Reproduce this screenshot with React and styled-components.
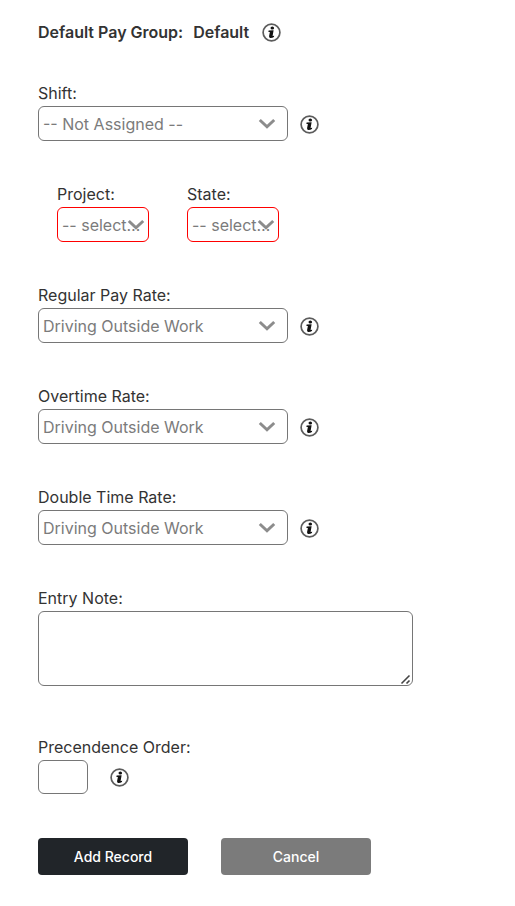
import React from "react";
import styled, { createGlobalStyle } from "styled-components";

const rates = ["Driving Outside Work", "Regular Work", "Travel"];

function App() {
  return (
    <>
      <GlobalStyle />
      <RecordForm onSubmit={e => e.preventDefault()}>
        <PayGroup>
          <span>Default Pay Group:</span>
          <Control $gap={12}>
            <span>Default</span>
            <InfoButton label="About the default pay group" />
          </Control>
        </PayGroup>

        <SelectField
          id="shift"
          label="Shift:"
          options={["-- Not Assigned --", "Day", "Night"]}
          info
        />

        <Pair>
          <SelectField
            id="project"
            label="Project:"
            options={["-- select --"]}
            small
            required
          />
          <SelectField
            id="state"
            label="State:"
            options={["-- select --"]}
            small
            required
          />
        </Pair>

        <SelectField
          id="regular"
          label="Regular Pay Rate:"
          options={rates}
          info
        />
        <SelectField id="overtime" label="Overtime Rate:" options={rates} info />
        <SelectField
          id="double"
          label="Double Time Rate:"
          options={rates}
          info
        />

        <NoteField>
          <Label htmlFor="note">Entry Note:</Label>
          <NoteBox>
            <Note id="note" />
            <Grip viewBox="0 0 12 12" aria-hidden="true">
              <path d="M1.5 10.5 L9.5 2.5 M6.5 10.5 L9.5 7.5" />
            </Grip>
          </NoteBox>
        </NoteField>

        <Field>
          <Label htmlFor="order">Precendence Order:</Label>
          <Control $gap={21}>
            <OrderInput id="order" type="text" />
            <InfoButton label="About precendence order" />
          </Control>
        </Field>

        <Actions>
          <Button type="submit" $color="#212529">
            Add Record
          </Button>
          <Button type="button" $color="#7b7b7b">
            Cancel
          </Button>
        </Actions>
      </RecordForm>
    </>
  );
}

const SelectField = ({ id, label, options, small, required, info }) => (
  <Field>
    <Label htmlFor={id}>{label}</Label>
    <Control $gap={11}>
      <SelectBox $small={small} $required={required}>
        <Chevron viewBox="0 0 18 12" $small={small} aria-hidden="true">
          <path d="M1.8 2 L9 8.8 L16.2 2" />
        </Chevron>
        <Select id={id}>
          {options.map(item => (
            <option key={item}>{item}</option>
          ))}
        </Select>
      </SelectBox>
      {info && <InfoButton label={`About ${label.replace(":", "")}`} />}
    </Control>
  </Field>
);

const InfoButton = ({ label }) => (
  <IconButton type="button" aria-label={label}>
    <svg width="20" height="20" viewBox="0 0 20 20">
      <circle
        cx="10.5"
        cy="10.5"
        r="8.4"
        fill="#fff"
        stroke="#5c5c5c"
        strokeWidth="1.7"
      />
      <ellipse cx="11.3" cy="5.9" rx="1.8" ry="1.5" fill="#111" />
      <path
        d="M7.6 8.4 L12.6 8.2 L11.6 14 L13.2 13.7 L12.9 15 Q11.2 16.2 9.2 16 Q7.7 15.7 8.1 14.1 L8.9 9.9 L7.4 9.9 Z"
        fill="#111"
      />
    </svg>
  </IconButton>
);

const GlobalStyle = createGlobalStyle`
  * {
    box-sizing: border-box;
  }

  body {
    margin: 0;
    background: #fff;
  }

  body, button, input, select, textarea {
    font-family: Inter, "Liberation Sans", sans-serif;
    font-size: 16px;
  }
`;

const RecordForm = styled.form`
  padding: 20px 38px 32px;
  color: #333;
`;

const PayGroup = styled.div`
  display: flex;
  align-items: center;
  gap: 10px;
  margin-bottom: 40px;
  line-height: 24px;
  font-weight: 600;
`;

const Field = styled.div`
  margin-bottom: 44px;
`;

const NoteField = styled(Field)`
  margin-bottom: 52px;
`;

const Pair = styled.div`
  display: flex;
  gap: 38px;
  padding-left: 19px;
`;

const Label = styled.label`
  display: block;
  width: fit-content;
  margin-bottom: 4px;
  line-height: 18px;
`;

const Control = styled.div`
  display: flex;
  align-items: center;
  gap: ${props => props.$gap}px;
`;

const SelectBox = styled.div`
  position: relative;
  width: ${props => (props.$small ? 92 : 250)}px;
  border: 1px solid ${props => (props.$required ? "#f00" : "#767676")};
  border-radius: 6px;
`;

const Chevron = styled.svg`
  position: absolute;
  top: 11px;
  right: ${props => (props.$small ? 3 : 11)}px;
  width: 18px;
  height: 12px;
  fill: none;
  stroke: #8c8c8c;
  stroke-width: 3;
`;

/* sits over the chevron, so a long value runs across it */
const Select = styled.select`
  position: relative;
  display: block;
  appearance: none;
  width: 100%;
  height: 33px;
  padding: 0 5px 0 4px;
  border: 0;
  background: transparent;
  color: #7b7b7b;
  text-overflow: ellipsis;
`;

const IconButton = styled.button`
  display: flex;
  padding: 0;
  border: 0;
  background: none;
  cursor: pointer;
`;

const NoteBox = styled.div`
  position: relative;
  max-width: 375px;
`;

const Note = styled.textarea`
  display: block;
  width: 100%;
  height: 75px;
  border: 1px solid #767676;
  border-radius: 6px;
  resize: none;
`;

const Grip = styled.svg`
  position: absolute;
  right: 1px;
  bottom: 1px;
  width: 12px;
  height: 12px;
  fill: none;
  stroke: #444;
  stroke-width: 1.6;
  pointer-events: none;
`;

const OrderInput = styled.input`
  width: 50px;
  height: 34px;
  border: 1px solid #767676;
  border-radius: 6px;
`;

const Actions = styled.div`
  display: flex;
  gap: 33px;
`;

const Button = styled.button`
  width: 150px;
  height: 37px;
  border: 0;
  border-radius: 4px;
  background: ${props => props.$color};
  color: #fff;
  font-size: 14px;
  font-weight: 500;
  cursor: pointer;
`;

export default App;
